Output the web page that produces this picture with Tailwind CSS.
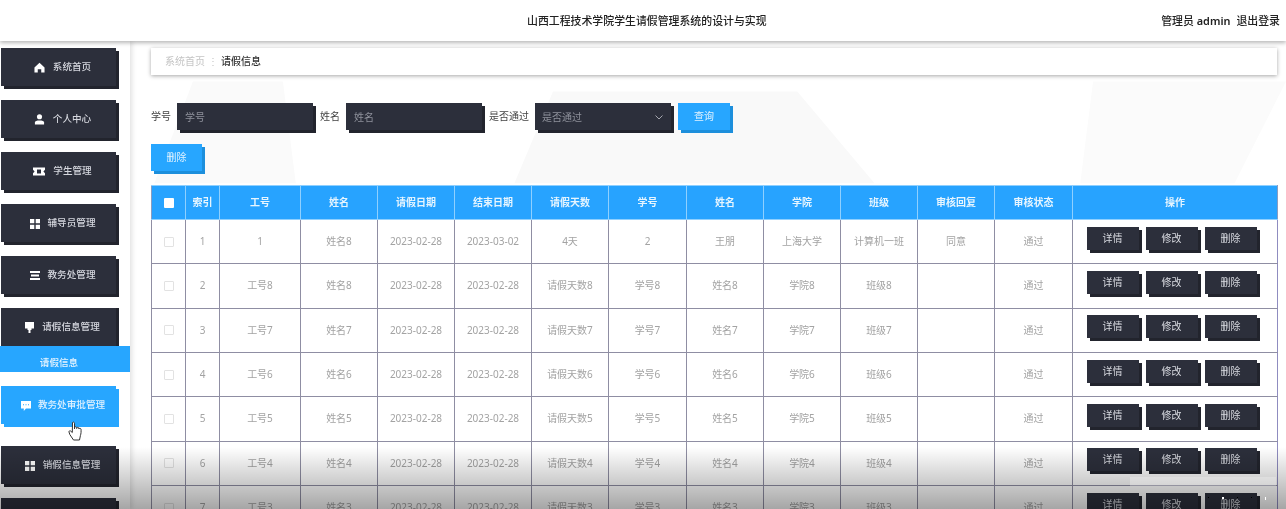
<!DOCTYPE html>
<html lang="zh-CN">
<head>
<meta charset="utf-8">
<title>山西工程技术学院学生请假管理系统的设计与实现</title>
<script src="https://cdn.jsdelivr.net/npm/@tailwindcss/browser@4"></script>
</head>
<body class="m-0 overflow-hidden bg-white">
<div class="relative h-[509px] w-[1286px] overflow-hidden bg-white blur-[0.55px] font-['Noto_Sans','Noto_Sans_CJK_SC',sans-serif]">

  <!-- faint page background shapes -->
  <div class="absolute inset-0 bg-[#fafafa] [clip-path:polygon(15%_16%,22%_16%,23%_36%,12%_36%)]"></div>
  <div class="absolute inset-0 bg-[#f9f9f9] [clip-path:polygon(43%_18%,62%_18%,68%_36%,40%_36%)]"></div>
  <div class="absolute inset-0 bg-[#fbfbfb] [clip-path:polygon(85%_16%,100%_16%,96%_36%,84%_36%)]"></div>

  <!-- header -->
  <header class="relative z-20 flex h-[41px] items-center justify-between bg-white pl-[527px] pr-[6px] pt-[1px] text-[10.9px] text-[#222] shadow-[0_2px_4px_rgba(0,0,0,0.28)]">
    <div class="font-medium">山西工程技术学院学生请假管理系统的设计与实现</div>
    <div class="flex gap-[6px]"><span class="font-medium">管理员 <b class="font-semibold">admin</b></span><span class="font-medium">退出登录</span></div>
  </header>

  <div class="relative flex">
    <!-- sidebar -->
    <aside class="z-10 flex h-[468px] w-[130px] shrink-0 flex-col overflow-hidden bg-white pt-[7px] text-[9.6px] font-medium text-[#d5d7de] shadow-[2px_0_5px_rgba(0,0,0,0.12)]">
      <a class="ml-[1px] flex h-[38px] w-[115px] shrink-0 items-center justify-center gap-[8px] bg-[#2c2f3b] pl-[8px] pt-[1px] shadow-[3px_3px_0_#22242d]">
        <svg class="h-[11px] w-[11px]" viewBox="0 0 12 12" fill="#fff"><path d="M6 .8 .5 6v5.500h3.600V8h3.800v3.500h3.600V6z"/></svg><span>系统首页</span></a>
      <a class="ml-[1px] mt-[14px] flex h-[38px] w-[115px] shrink-0 items-center justify-center gap-[8px] bg-[#2c2f3b] pl-[8px] pt-[1px] shadow-[3px_3px_0_#22242d]">
        <svg class="h-[11px] w-[11px]" viewBox="0 0 12 12" fill="#fff"><circle cx="6" cy="3" r="2.800"/><path d="M1 11.500V9.200C1 7.600 3 7 6 7s5 .6 5 2.200v2.300z"/></svg><span>个人中心</span></a>
      <a class="ml-[1px] mt-[14px] flex h-[38px] w-[115px] shrink-0 items-center justify-center gap-[8px] bg-[#2c2f3b] pl-[8px] pt-[1px] shadow-[3px_3px_0_#22242d]">
        <svg class="h-[11px] w-[12px]" viewBox="0 0 12 11" fill="#fff"><path d="M0 1.500h12v2.200L10.400 5.500 12 7.300v2.200H0V7.300L1.600 5.500 0 3.700zM4 3.500v4h4v-4z"/></svg><span>学生管理</span></a>
      <a class="ml-[1px] mt-[14px] flex h-[38px] w-[115px] shrink-0 items-center justify-center gap-[8px] bg-[#2c2f3b] pl-[8px] pt-[1px] shadow-[3px_3px_0_#22242d]">
        <svg class="h-[10px] w-[10px]" viewBox="0 0 10 10" fill="#fff"><path d="M0 0h4.300v4.300H0zM5.700 0H10v4.300H5.700zM0 5.700h4.300V10H0zM5.700 5.700H10V10H5.700z"/></svg><span>辅导员管理</span></a>
      <a class="ml-[1px] mt-[14px] flex h-[38px] w-[115px] shrink-0 items-center justify-center gap-[8px] bg-[#2c2f3b] pl-[8px] pt-[1px] shadow-[3px_3px_0_#22242d]">
        <svg class="h-[9px] w-[10px]" viewBox="0 0 10 9" fill="#fff"><path d="M0 0h10v2H0zM1 3.500h8v2H1zM0 7h10v2H0z"/></svg><span>教务处管理</span></a>
      <a class="ml-[1px] mt-[14px] flex h-[38px] w-[115px] shrink-0 items-center justify-center gap-[8px] bg-[#2c2f3b] pl-[8px] pt-[1px] shadow-[3px_0_0_#22242d]">
        <svg class="h-[11px] w-[9px]" viewBox="0 0 9 11" fill="#fff"><path d="M0 0h9v6.500H6.500V8H5.500v3h-2V8h-1V6.500H0z"/></svg><span>请假信息管理</span></a>
      <a class="flex h-[26px] w-[130px] shrink-0 items-center justify-center bg-[#27a6ff] pr-[12px] pt-[8px] text-[#e8f5ff]">请假信息</a>
      <a class="ml-[1px] mt-[14px] flex h-[38px] w-[115px] shrink-0 items-center justify-center gap-[7px] bg-[#27a6ff] pl-[9px] pt-[1px] text-[#dff1ff] shadow-[3px_3px_0_#27a6ff]">
        <svg class="h-[10px] w-[10px]" viewBox="0 0 10 10" fill="#fff"><path d="M0 0h10v7.500H5L2.800 10V7.500H0z"/><path d="M2 3.200h1v1H2zM4.500 3.200h1v1h-1zM7 3.200h1v1H7z" fill="#27a6ff"/></svg><span>教务处审批管理</span></a>
      <a class="ml-[1px] mt-[22px] flex h-[38px] w-[115px] shrink-0 items-center justify-center gap-[8px] bg-[#2c2f3b] pl-[8px] pt-[1px] shadow-[3px_3px_0_#22242d]">
        <svg class="h-[10px] w-[10px]" viewBox="0 0 10 10" fill="#fff"><path d="M0 0h4.300v4.300H0zM5.700 0H10v4.300H5.700zM0 5.700h4.300V10H0zM5.700 5.700H10V10H5.700z"/></svg><span>销假信息管理</span></a>
      <a class="ml-[1px] mt-[14px] h-[38px] w-[115px] shrink-0 bg-[#2c2f3b] shadow-[3px_3px_0_#22242d]"></a>
    </aside>

    <!-- main -->
    <main class="relative w-[1156px] shrink-0 pl-[21px] pt-[7px] text-[10px]">
      <div class="flex h-[27px] w-[1126px] items-center bg-white pl-[14px] shadow-[0_1px_4px_rgba(0,0,0,0.35)]">
        <span class="text-[#c4c4c4]">系统首页</span><span class="mx-[3px] text-[#c4c4c4]">⋮</span><span class="font-medium text-[#333]">请假信息</span>
      </div>

      <div class="mt-[28px] flex h-[27px] items-center text-[#444]">
        <span class="w-[26px]">学号</span>
        <div class="flex h-[27px] w-[136px] items-center bg-[#2c2f3b] pl-[8px] pt-[1px] text-[#8f929c] shadow-[3px_3px_0_#22242d]">学号</div>
        <span class="ml-[7px] w-[26px]">姓名</span>
        <div class="flex h-[27px] w-[136px] items-center bg-[#2c2f3b] pl-[8px] pt-[1px] text-[#8f929c] shadow-[3px_3px_0_#22242d]">姓名</div>
        <span class="ml-[7px] w-[46px]">是否通过</span>
        <div class="flex h-[27px] w-[136px] items-center justify-between bg-[#2c2f3b] pl-[7px] pr-[8px] pt-[1px] text-[#8f929c] shadow-[3px_3px_0_#22242d]">是否通过
          <svg class="h-[5px] w-[8px]" viewBox="0 0 8 5" fill="none" stroke="#a4a6ae"><path d="M.5.500 4 4 7.500.500"/></svg></div>
        <div class="ml-[7px] flex h-[27px] w-[52px] items-center justify-center bg-[#27a6ff] text-[#e2f3ff] shadow-[3px_3px_0_#1d8fdc]">查询</div>
      </div>

      <div class="mt-[14px] flex h-[27px] w-[51px] items-center justify-center bg-[#27a6ff] text-[#e2f3ff] shadow-[3px_3px_0_#1d8fdc]">删除</div>

      <table class="mt-[14px] w-[1126px] table-fixed border-collapse bg-white text-center text-[10px] text-[#a3a3a3] [&_td]:h-[44.33px] [&_td]:border [&_td]:border-[#8f8ea3] [&_td]:p-0 [&_th]:h-[34px] [&_th]:border [&_th]:border-[#8fd0ff] [&_th]:bg-[#27a3ff] [&_th]:p-0 [&_th]:font-semibold [&_th]:text-[#e6f5ff] [&_th:first-child]:border-l-[#8a9cc0] [&_th:last-child]:border-r-[#8a9cc0] [&_tr_td:last-child]:border-r-[#8f8cc0]">
        <colgroup>
          <col class="w-[34px]"><col class="w-[34px]"><col class="w-[81px]"><col class="w-[77px]"><col class="w-[77px]"><col class="w-[77px]"><col class="w-[77px]"><col class="w-[78px]"><col class="w-[77px]"><col class="w-[77px]"><col class="w-[77px]"><col class="w-[77px]"><col class="w-[78px]"><col class="w-[205px]">
        </colgroup>
        <thead>
          <tr>
            <th><span class="mx-auto block h-[10px] w-[10px] rounded-[1px] bg-white"></span></th><th>索引</th><th>工号</th><th>姓名</th><th>请假日期</th><th>结束日期</th><th>请假天数</th><th>学号</th><th>姓名</th><th>学院</th><th>班级</th><th>审核回复</th><th>审核状态</th><th>操作</th>
          </tr>
        </thead>
        <tbody>
          <tr>
            <td><span class="mx-auto block h-[10px] w-[10px] rounded-[1px] border border-[#e2e2e2]"></span></td><td>1</td><td>1</td><td>姓名8</td><td>2023-02-28</td><td>2023-03-02</td><td>4天</td><td>2</td><td>王朋</td><td>上海大学</td><td>计算机一班</td><td>同意</td><td>通过</td>
            <td><div class="flex justify-center gap-[7px] pr-[7px] pb-[7px] text-[#d8dae0]"><span class="flex h-[23px] w-[52px] items-center justify-center bg-[#2c2f3b] shadow-[3px_3px_0_#22242d]">详情</span><span class="flex h-[23px] w-[52px] items-center justify-center bg-[#2c2f3b] shadow-[3px_3px_0_#22242d]">修改</span><span class="flex h-[23px] w-[52px] items-center justify-center bg-[#2c2f3b] shadow-[3px_3px_0_#22242d]">删除</span></div></td>
          </tr>
          <tr>
            <td><span class="mx-auto block h-[10px] w-[10px] rounded-[1px] border border-[#e2e2e2]"></span></td><td>2</td><td>工号8</td><td>姓名8</td><td>2023-02-28</td><td>2023-02-28</td><td>请假天数8</td><td>学号8</td><td>姓名8</td><td>学院8</td><td>班级8</td><td></td><td>通过</td>
            <td><div class="flex justify-center gap-[7px] pr-[7px] pb-[7px] text-[#d8dae0]"><span class="flex h-[23px] w-[52px] items-center justify-center bg-[#2c2f3b] shadow-[3px_3px_0_#22242d]">详情</span><span class="flex h-[23px] w-[52px] items-center justify-center bg-[#2c2f3b] shadow-[3px_3px_0_#22242d]">修改</span><span class="flex h-[23px] w-[52px] items-center justify-center bg-[#2c2f3b] shadow-[3px_3px_0_#22242d]">删除</span></div></td>
          </tr>
          <tr>
            <td><span class="mx-auto block h-[10px] w-[10px] rounded-[1px] border border-[#e2e2e2]"></span></td><td>3</td><td>工号7</td><td>姓名7</td><td>2023-02-28</td><td>2023-02-28</td><td>请假天数7</td><td>学号7</td><td>姓名7</td><td>学院7</td><td>班级7</td><td></td><td>通过</td>
            <td><div class="flex justify-center gap-[7px] pr-[7px] pb-[7px] text-[#d8dae0]"><span class="flex h-[23px] w-[52px] items-center justify-center bg-[#2c2f3b] shadow-[3px_3px_0_#22242d]">详情</span><span class="flex h-[23px] w-[52px] items-center justify-center bg-[#2c2f3b] shadow-[3px_3px_0_#22242d]">修改</span><span class="flex h-[23px] w-[52px] items-center justify-center bg-[#2c2f3b] shadow-[3px_3px_0_#22242d]">删除</span></div></td>
          </tr>
          <tr>
            <td><span class="mx-auto block h-[10px] w-[10px] rounded-[1px] border border-[#e2e2e2]"></span></td><td>4</td><td>工号6</td><td>姓名6</td><td>2023-02-28</td><td>2023-02-28</td><td>请假天数6</td><td>学号6</td><td>姓名6</td><td>学院6</td><td>班级6</td><td></td><td>通过</td>
            <td><div class="flex justify-center gap-[7px] pr-[7px] pb-[7px] text-[#d8dae0]"><span class="flex h-[23px] w-[52px] items-center justify-center bg-[#2c2f3b] shadow-[3px_3px_0_#22242d]">详情</span><span class="flex h-[23px] w-[52px] items-center justify-center bg-[#2c2f3b] shadow-[3px_3px_0_#22242d]">修改</span><span class="flex h-[23px] w-[52px] items-center justify-center bg-[#2c2f3b] shadow-[3px_3px_0_#22242d]">删除</span></div></td>
          </tr>
          <tr>
            <td><span class="mx-auto block h-[10px] w-[10px] rounded-[1px] border border-[#e2e2e2]"></span></td><td>5</td><td>工号5</td><td>姓名5</td><td>2023-02-28</td><td>2023-02-28</td><td>请假天数5</td><td>学号5</td><td>姓名5</td><td>学院5</td><td>班级5</td><td></td><td>通过</td>
            <td><div class="flex justify-center gap-[7px] pr-[7px] pb-[7px] text-[#d8dae0]"><span class="flex h-[23px] w-[52px] items-center justify-center bg-[#2c2f3b] shadow-[3px_3px_0_#22242d]">详情</span><span class="flex h-[23px] w-[52px] items-center justify-center bg-[#2c2f3b] shadow-[3px_3px_0_#22242d]">修改</span><span class="flex h-[23px] w-[52px] items-center justify-center bg-[#2c2f3b] shadow-[3px_3px_0_#22242d]">删除</span></div></td>
          </tr>
          <tr>
            <td><span class="mx-auto block h-[10px] w-[10px] rounded-[1px] border border-[#e2e2e2]"></span></td><td>6</td><td>工号4</td><td>姓名4</td><td>2023-02-28</td><td>2023-02-28</td><td>请假天数4</td><td>学号4</td><td>姓名4</td><td>学院4</td><td>班级4</td><td></td><td>通过</td>
            <td><div class="flex justify-center gap-[7px] pr-[7px] pb-[7px] text-[#d8dae0]"><span class="flex h-[23px] w-[52px] items-center justify-center bg-[#2c2f3b] shadow-[3px_3px_0_#22242d]">详情</span><span class="flex h-[23px] w-[52px] items-center justify-center bg-[#2c2f3b] shadow-[3px_3px_0_#22242d]">修改</span><span class="flex h-[23px] w-[52px] items-center justify-center bg-[#2c2f3b] shadow-[3px_3px_0_#22242d]">删除</span></div></td>
          </tr>
          <tr>
            <td><span class="mx-auto block h-[10px] w-[10px] rounded-[1px] border border-[#e2e2e2]"></span></td><td>7</td><td>工号3</td><td>姓名3</td><td>2023-02-28</td><td>2023-02-28</td><td>请假天数3</td><td>学号3</td><td>姓名3</td><td>学院3</td><td>班级3</td><td></td><td>通过</td>
            <td><div class="flex justify-center gap-[7px] pr-[7px] pb-[7px] text-[#d8dae0]"><span class="flex h-[23px] w-[52px] items-center justify-center bg-[#2c2f3b] shadow-[3px_3px_0_#22242d]">详情</span><span class="flex h-[23px] w-[52px] items-center justify-center bg-[#2c2f3b] shadow-[3px_3px_0_#22242d]">修改</span><span class="flex h-[23px] w-[52px] items-center justify-center bg-[#2c2f3b] shadow-[3px_3px_0_#22242d]">删除</span></div></td>
          </tr>
        </tbody>
      </table>
    </main>
  </div>

  <!-- hand cursor -->
  <svg class="absolute left-[68px] top-[421px] z-30 h-[20px] w-[16px]" viewBox="0 0 16 20" fill="#fff" stroke="#333" stroke-width="1" stroke-linejoin="round"><path d="M4.500 1.500c1-.8 2-.3 2 .8V8l.1-1.600c.5-.8 1.700-.8 2 .1l.1 1 .1-.7c.5-.7 1.700-.6 2 .2l.1 1 .2-.4c.6-.6 1.700-.3 1.900.6.200 2 .1 4.600-.6 6.400L11.500 19H5.500L1.800 13.500 1 11c-.2-1 .8-1.600 1.600-1L4.300 11.500z"/></svg>

  <!-- video fade along the bottom of the frame -->
  <div class="pointer-events-none absolute inset-x-0 bottom-0 z-40 h-[62px] bg-gradient-to-b from-transparent to-black/35"></div>
  <div class="pointer-events-none absolute left-[1130px] top-[477px] z-40 h-[9px] w-[146px] bg-white/25"></div>
  <div class="pointer-events-none absolute left-[1208px] top-[497px] z-40 flex gap-[13px]">
    <span class="h-[1px] w-[1px] bg-black"></span><span class="h-[2px] w-[2px] bg-white"></span><span class="h-[1px] w-[1px] bg-black"></span><span class="h-[1px] w-[1px] bg-black"></span><span class="h-[3px] w-[1px] bg-white"></span>
  </div>
</div>
</body>
</html>
